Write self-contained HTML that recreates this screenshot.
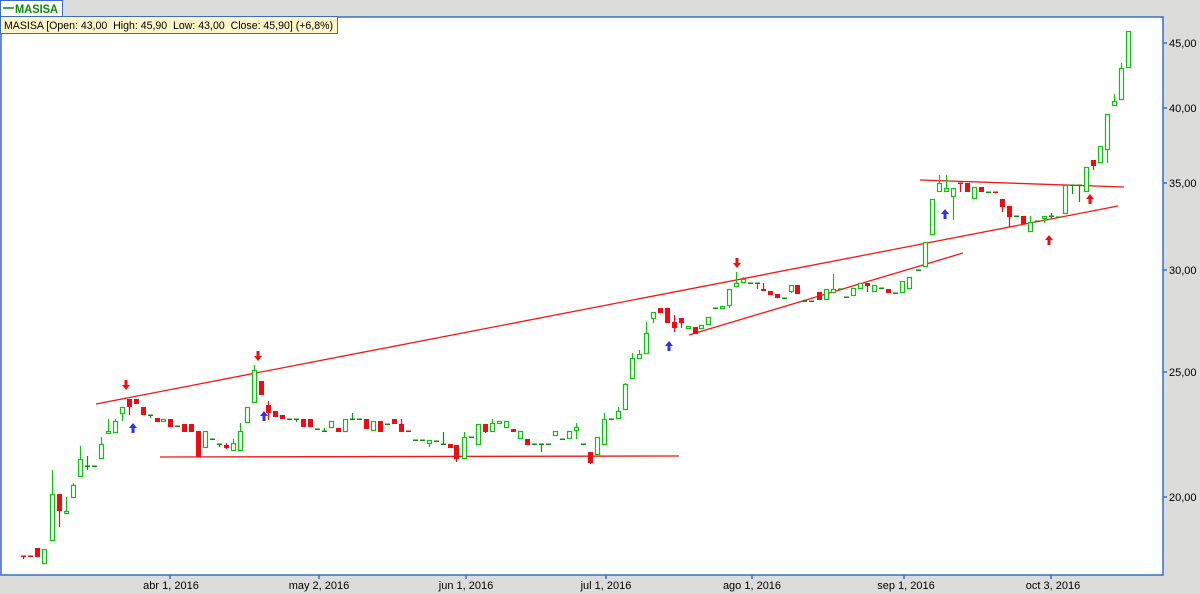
<!DOCTYPE html>
<html><head><meta charset="utf-8"><style>
body{margin:0;background:#dcdddb;width:1200px;height:594px;overflow:hidden;font-family:"Liberation Sans",sans-serif}
svg{position:absolute;left:0;top:0}
</style></head><body>
<svg id="s" width="1200" height="594" xmlns="http://www.w3.org/2000/svg" font-family="Liberation Sans, sans-serif">
<rect x="0" y="0" width="1200" height="594" fill="#dcdddb"/>
<rect x="1" y="17" width="1162" height="558" fill="#fff" stroke="#3b6cc8" stroke-width="1.5"/>
<g font-size="11" fill="#000">
<text x="1169" y="47">45,00</text><text x="1169" y="112">40,00</text><text x="1169" y="187">35,00</text>
<text x="1169" y="274">30,00</text><text x="1169" y="376">25,00</text><text x="1169" y="501">20,00</text>
</g>
<g stroke="#3b6cc8" stroke-width="1.5">
<line x1="1163" y1="43" x2="1167" y2="43"/><line x1="1163" y1="108" x2="1167" y2="108"/><line x1="1163" y1="183" x2="1167" y2="183"/>
<line x1="1163" y1="270" x2="1167" y2="270"/><line x1="1163" y1="372" x2="1167" y2="372"/><line x1="1163" y1="497" x2="1167" y2="497"/>
<line x1="170" y1="575" x2="170" y2="579"/><line x1="319" y1="575" x2="319" y2="579"/><line x1="466" y1="575" x2="466" y2="579"/>
<line x1="606" y1="575" x2="606" y2="579"/><line x1="752" y1="575" x2="752" y2="579"/><line x1="904" y1="575" x2="904" y2="579"/><line x1="1051" y1="575" x2="1051" y2="579"/>
</g>
<g font-size="11" fill="#000" text-anchor="middle">
<text x="171" y="589">abr 1, 2016</text><text x="319" y="589">may 2, 2016</text><text x="466" y="589">jun 1, 2016</text>
<text x="606" y="589">jul 1, 2016</text><text x="752" y="589">ago 1, 2016</text><text x="906" y="589">sep 1, 2016</text><text x="1053" y="589">oct 3, 2016</text>
</g>
<g stroke="#f01818" stroke-width="1.3">
<line x1="96" y1="404" x2="1118" y2="206"/>
<line x1="160" y1="457" x2="679" y2="456"/>
<line x1="689" y1="335" x2="963" y2="253"/>
<line x1="920" y1="180" x2="1124" y2="187"/>
</g>
<g id="c"></g>
<g id="a"></g>
<rect x="0.5" y="0.5" width="62" height="16" fill="#fff" stroke="#3b6cc8"/>
<line x1="3" y1="8" x2="14" y2="8" stroke="#0a8a0a" stroke-width="1.5"/>
<text x="15" y="13" font-size="12" font-weight="bold" fill="#0a8a0a" textLength="43" lengthAdjust="spacingAndGlyphs">MASISA</text>
<rect x="0.5" y="16.5" width="337" height="17" fill="#fff5c8" stroke="#3b6cc8"/>
<text x="4" y="29" font-size="11" fill="#000" xml:space="preserve" textLength="329" lengthAdjust="spacingAndGlyphs">MASISA [Open: 43,00  High: 45,90  Low: 43,00  Close: 45,90] (+6,8%)</text>
</svg>
<script>
var D=[[23,556,556,556,559,'e'],[30,556,556,556,556,'e'],[37,548,557,548,557,'r'],[44,549,564,549,564,'g'],
[52,494,541,470,541,'g'],[59,494,511,494,527,'r'],[66,511,514,497,514,'g'],[73,485,498,483,498,'g'],[80,459,477,446,477,'g'],
[87,466,466,456,470,'d'],[94,466,466,466,466,'d'],[101,444,459,437,459,'g'],[108,431,434,419,434,'g'],[115,421,433,419,433,'g'],
[122,407,414,407,421,'g'],[129,399,407,399,415,'r'],[136,399,404,399,404,'r'],[143,407,415,407,415,'r'],[150,415,415,415,418,'d'],
[157,418,422,418,422,'r'],[163,419,422,419,422,'g'],[170,419,427,419,427,'r'],[177,426,426,426,426,'d'],[184,424,432,424,432,'r'],
[191,424,432,424,432,'r'],[198,431,457,431,457,'r'],[205,431,448,431,448,'g'],[212,439,439,439,439,'d'],[219,444,444,444,447,'d'],
[226,445,448,443,449,'r'],[233,443,451,439,451,'g'],[240,431,451,423,451,'g'],[247,407,423,407,423,'g'],[254,370,403,365,403,'g'],
[261,381,395,381,395,'r'],[268,405,413,401,420,'r'],[275,411,417,411,417,'r'],[282,415,419,415,419,'r'],[289,419,419,419,419,'d'],
[296,419,419,419,422,'d'],[303,419,427,419,427,'r'],[310,419,427,419,427,'r'],[317,429,429,429,429,'d'],[324,431,431,428,431,'d'],
[331,421,428,421,428,'g'],[338,428,432,428,432,'r'],[345,419,432,419,432,'g'],[352,419,419,413,419,'d'],[359,419,419,419,419,'d'],
[366,419,429,419,429,'r'],[373,421,431,421,431,'g'],[380,421,432,421,432,'r'],[387,424,424,424,424,'d'],[394,419,424,419,424,'r'],
[401,424,432,419,432,'r'],[408,431,431,431,431,'e'],[415,440,440,440,440,'d'],[422,440,440,440,440,'d'],[429,440,444,440,447,'g'],
[436,441,441,441,441,'d'],[443,444,444,432,444,'d'],[450,444,448,444,448,'r'],[456,445,459,445,462,'r'],[464,437,459,432,459,'g'],
[471,437,437,437,437,'d'],[478,424,445,424,445,'g'],[485,424,432,424,433,'r'],[492,423,432,419,432,'g'],[499,421,423,421,423,'g'],
[506,421,428,421,428,'g'],[513,429,432,429,432,'r'],[520,431,439,431,439,'g'],[527,439,445,439,445,'r'],[534,444,444,444,444,'d'],
[541,444,444,444,452,'d'],[548,444,444,444,444,'d'],[555,431,436,431,436,'g'],[562,439,439,439,439,'d'],[569,431,439,431,439,'g'],
[576,427,431,423,439,'g'],[583,444,444,444,444,'d'],[590,452,463,452,464,'r'],[597,437,455,437,455,'g'],[604,419,445,413,445,'g'],
[611,419,419,419,419,'d'],[618,411,419,407,419,'g'],[625,384,410,383,410,'g'],[632,358,379,353,379,'g'],[639,354,359,350,359,'g'],
[646,333,354,322,354,'g'],[653,312,319,312,323,'g'],[660,308,313,308,313,'r'],[667,308,323,308,323,'r'],[674,322,328,315,332,'r'],
[681,318,323,318,328,'r'],[688,326,328,326,328,'g'],[695,327,334,327,334,'r'],[701,325,329,325,329,'g'],[708,317,325,317,325,'g'],
[715,308,308,308,308,'d'],[722,306,309,306,309,'g'],[729,289,306,289,308,'g'],[736,283,287,272,287,'g'],[743,279,283,277,283,'g'],
[750,283,283,283,283,'d'],[757,283,283,283,289,'d'],[763,289,291,283,291,'r'],[770,291,295,291,295,'r'],[777,294,298,294,298,'r'],
[784,298,298,298,298,'d'],[791,285,292,285,293,'g'],[797,285,294,285,294,'r'],[804,301,301,301,301,'d'],[811,301,301,301,301,'d'],
[819,292,300,292,300,'r'],[826,289,300,289,300,'g'],[833,289,293,274,293,'g'],[840,289,289,289,289,'d'],[846,297,297,297,297,'d'],
[853,288,296,288,296,'g'],[860,283,289,283,289,'g'],[867,283,286,283,292,'r'],[874,285,292,285,292,'g'],[881,288,288,288,288,'d'],
[888,289,293,289,293,'r'],[895,293,293,293,293,'d'],[902,281,293,281,293,'g'],[909,277,289,277,289,'g'],[918,270,270,270,270,'d'],
[925,242,267,242,267,'g'],[932,199,235,199,235,'g'],[939,183,192,175,192,'g'],[946,188,192,175,192,'g'],[953,188,197,188,220,'g'],
[960,183,183,183,192,'e'],[967,183,192,183,192,'r'],[974,187,199,187,199,'g'],[981,187,192,187,192,'r'],[988,192,192,192,192,'d'],
[995,192,192,192,192,'e'],[1002,199,207,199,212,'r'],[1009,206,217,206,227,'r'],[1016,216,216,216,216,'d'],[1023,216,224,216,224,'r'],
[1030,222,232,216,232,'g'],[1037,221,221,221,221,'d'],[1044,216,218,216,223,'g'],[1051,216,216,213,219,'d'],[1058,217,217,217,217,'d'],
[1065,185,214,185,214,'g'],[1072,185,185,185,194,'d'],[1079,185,185,185,202,'d'],[1086,167,192,167,192,'g'],[1093,160,166,160,170,'r'],
[1100,146,163,146,163,'g'],[1107,114,150,114,163,'g'],[1114,101,106,94,106,'g'],[1121,68,100,63,100,'g'],[1128,31,68,31,68,'g']];
var g=document.getElementById('c'),h='';
D.forEach(function(d){var x=d[0],t=d[5],col=(t=='r'||t=='e')?'#ee0b14':(t=='d'?'#0a900a':'#10c010');
if(d[3]<d[1]||d[4]>d[2])h+='<line x1="'+(x+.5)+'" y1="'+d[3]+'" x2="'+(x+.5)+'" y2="'+d[4]+'" stroke="'+col+'" stroke-width="1.2"/>';
if(t=='d'||t=='e')h+='<rect x="'+(x-2)+'" y="'+(d[1]-0.5)+'" width="5" height="1.5" fill="'+col+'"/>';
else if(t=='r')h+='<rect x="'+(x-2)+'" y="'+d[1]+'" width="5" height="'+Math.max(2,d[2]-d[1])+'" fill="'+col+'"/>';
else h+='<rect x="'+(x-1.5)+'" y="'+(d[1]+.5)+'" width="4" height="'+Math.max(2,d[2]-d[1]-1)+'" fill="#fff" stroke="'+col+'" stroke-width="1.2"/>';});
g.innerHTML=h;
var A=[[126,386,1,'#ee1010'],[258,357,1,'#ee1010'],[737,264,1,'#ee1010'],[133,427,0,'#3030f0'],[264,415,0,'#3030f0'],[669,345,0,'#3030f0'],[945,213,0,'#3030f0'],[1049,239,0,'#ee1010'],[1090,198,0,'#ee1010']],a='';
A.forEach(function(v){var x=v[0],y=v[1],p;
if(v[2])p=(x-1.5)+','+(y-6)+' '+(x+1.5)+','+(y-6)+' '+(x+1.5)+','+(y-1)+' '+(x+4)+','+(y-1)+' '+x+','+(y+4)+' '+(x-4)+','+(y-1)+' '+(x-1.5)+','+(y-1);
else p=(x-1.5)+','+(y+6)+' '+(x+1.5)+','+(y+6)+' '+(x+1.5)+','+(y+1)+' '+(x+4)+','+(y+1)+' '+x+','+(y-4)+' '+(x-4)+','+(y+1)+' '+(x-1.5)+','+(y+1);
a+='<polygon points="'+p+'" fill="'+v[3]+'"/>';});
document.getElementById('a').innerHTML=a;
</script>
</body></html>
